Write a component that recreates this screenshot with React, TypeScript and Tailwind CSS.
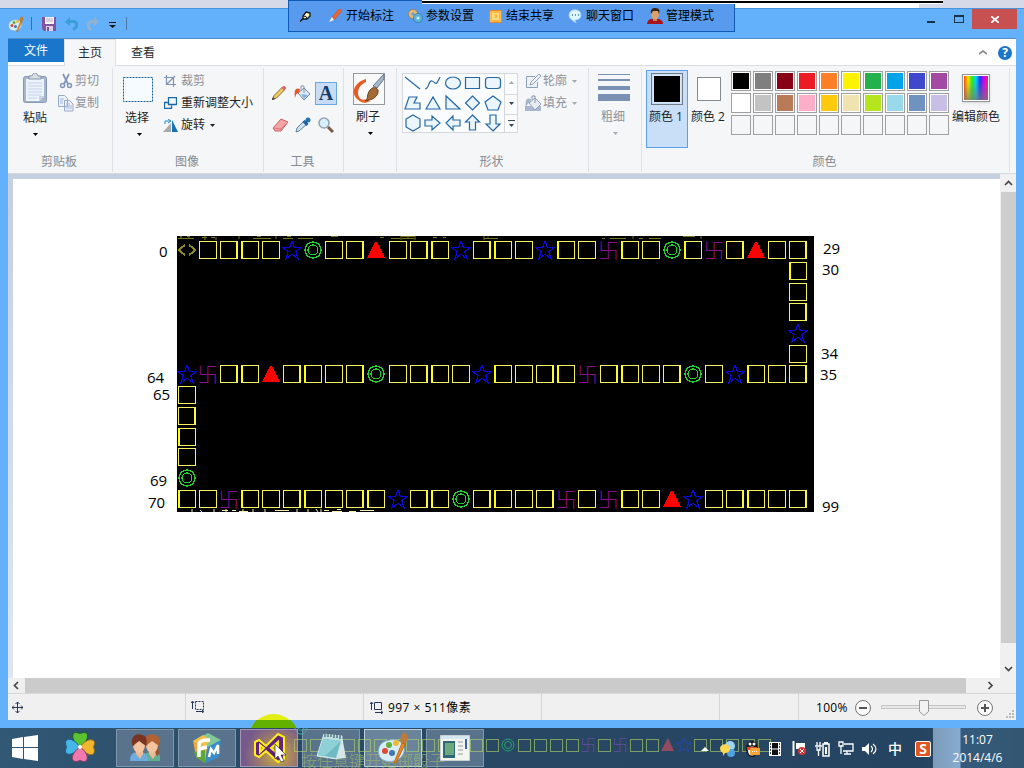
import React from "react";

type Kid = { children?: React.ReactNode; className?: string };

const Svg = ({ w, h, vb, children, className = "" }: { w: number; h: number; vb?: string } & Kid) => (
  <svg width={w} height={h} viewBox={vb ?? `0 0 ${w} ${h}`} className={`block shrink-0 ${className}`} fill="none">
    {children}
  </svg>
);

const Arrow = ({ className = "text-[#222]" }: Kid) => (
  <Svg w={5} h={3} className={className}>
    <path d="M0 0h5L2.5 3z" fill="currentColor" />
  </Svg>
);

const STAR = "M8 .8l1.9 5.1 5.6.1-4.4 3.2 1.6 5.6L8 11.5l-4.7 3.3 1.6-5.6L.5 6l5.6-.1z";

const Tile = ({ kind, i }: { kind: string; i: number }) => {
  if (kind === "Y")
    return (
      <Svg w={20} h={18}>
        <path d="M8 4L1.500 9 8 14M12 4l6.500 5-6.500 5" stroke="#8a8a18" strokeWidth="2" shapeRendering="crispEdges" />
      </Svg>
    );
  if (kind === "s")
    return (
      <Svg w={20} h={20} vb="0 0 16 16">
        <path d={STAR} stroke="#0808dc" strokeWidth="1" shapeRendering="crispEdges" />
      </Svg>
    );
  if (kind === "o")
    return (
      <Svg w={18} h={18}>
        <circle cx="9" cy="9" r="8" stroke="#20cf30" strokeWidth="1.4" shapeRendering="crispEdges" />
        <circle cx="9" cy="9" r="5" stroke="#20cf30" strokeWidth="1.2" shapeRendering="crispEdges" />
      </Svg>
    );
  if (kind === "t")
    return (
      <Svg w={18} h={18}>
        <path d="M8 1h2l8 16H0z" fill="#ff0000" shapeRendering="crispEdges" />
      </Svg>
    );
  if (kind === "w") return <span className="text-[21px] font-light leading-[20px] text-[#8a108c]">卐</span>;
  if (kind === "q")
    return (
      <div
        className={`h-[18px] w-[18px] border border-[#f6f25c] ${i % 3 === 0 ? "border-l-2 border-l-[#ffff00]" : ""} ${i % 3 === 2 ? "border-r-2 border-r-[#fbf83c]" : ""}`}
      />
    );
  return null;
};

const gap = ".".repeat(29);
const board = [
  "Yqqqqsoqqtqqqsqqqsqqwqqoqwqtqq",
  gap + "q",
  gap + "q",
  gap + "q",
  gap + "s",
  gap + "q",
  "swqqtqqqqoqqqqsqqqqwqqqqoqsqqq",
  "q" + gap,
  "q" + gap,
  "q" + gap,
  "q" + gap,
  "o" + gap,
  "qqwqqqqqqqsqqoqqqqwqwqqtsqqqqq",
];

const Board = () => (
  <div className="absolute left-[164px] top-[57px] h-[276px] w-[637px] overflow-hidden bg-black">
    <div className="flex h-[4px]">
      <Svg w={637} h={4}>
        <path
          d="M1 2.5h16M3 .5h2M10 .5h3M4 0v3M12 0v3M25 1.5h5M34 1.5h4M28 0v4M39 1v3M62 0v3M76 2.5h18M80 .5h4M99 0v3M106 2.5h10M110 .5h4M121 2.5h15M154 .5h7M203 1.5h4M214 2.5h9M224 .5h14M225 2.5h12M231 0v3M224 0v4M238 0v4M256 1.5h4M266 1.5h3M307 2.5h14M311 .5v2M307 0v4M425 2.5h3M433 2.5h16M456 0v3M462 2.5h4M472 2.5h12M506 .5h12M524 0v3"
          stroke="#77751b"
        />
      </Svg>
    </div>
    <div className="-ml-px grid h-[269px] w-[633px] grid-cols-[repeat(30,minmax(0,1fr))] grid-rows-[repeat(13,minmax(0,1fr))]">
      {board.flatMap((row, r) =>
        [...row].map((k, c) => (
          <div key={`${r}-${c}`} className="flex items-center justify-center">
            <Tile kind={k} i={c + r} />
          </div>
        ))
      )}
    </div>
    <Svg w={637} h={3}>
      <path
        d="M15 0v3M23 1l2 2M37 0v3M45 1.5h6M55 1.5h4M49 0v3M62 2.5h9M66 0v3M76 0v3M88 0v3M98 1.5h14M120 0v3M131 0v3M139 0l2 3M147 1.5h5M144 0v3M155 2.5h10M160 .5h4M172 2.5h7M183 1.5h14"
        stroke="#f1eeb0"
      />
    </Svg>
  </div>
);

const Num = ({ children, className }: Kid) => (
  <span className={`absolute -mt-px text-[15px] leading-[18px] text-black ${className}`}>{children}</span>
);

const Palette = ({ s = 16 }: { s?: number }) => (
  <Svg w={s} h={s} vb="0 0 32 32">
    <path d="M13 8C4 9 0 15 2 23c2 8 17 9 23 1 4-5 2-10 0-13-3-3-8-4-12-3z" fill="#d8ecf5" stroke="#87aec5" />
    <circle cx="8" cy="19" r="3" fill="#dc4a35" />
    <circle cx="12" cy="13" r="3" fill="#63af3b" />
    <circle cx="19" cy="11" r="3" fill="#e9bd33" />
    <circle cx="15" cy="21" r="3" fill="#3f78ad" />
    <path d="M27 0c5 3 4 8 1 12l-4-1C22 6 25 3 27 0z" fill="#bf7b35" />
    <path d="M25 11l3 1-9 19h-2z" fill="#ef8b29" stroke="#bb6718" />
  </Svg>
);

const Person = ({ x = 0, girl = false }: { x?: number; girl?: boolean }) => (
  <g transform={`translate(${x} 0)`}>
    <path d="M0 28c0-7 3-9 9-9s9 2 9 9z" fill={girl ? "#65ad94" : "#6cacdf"} />
    <path d="M6 17h7v4l-3 5-4-5z" fill="#efb992" />
    {girl && <path d="M3 5c4-6 13-2 12 6 0 5 2 8 0 12-4-1-3-10-3-12z" fill="#9b512e" />}
    <ellipse cx="9" cy="12" rx="6" ry="8" fill="#f4c4a0" />
    <path d="M2 12C0 2 8 0 12 2c6 1 5 7 4 11-3-2-5-4-7-5-2 2-4 2-5 5z" fill={girl ? "#b06232" : "#7b3424"} />
  </g>
);

const Group = ({ w, label, children, className = "" }: { w: string; label?: string } & Kid) => (
  <div className={`flex h-[107px] shrink-0 flex-col ${w}`}>
    <div className="flex h-[104px] flex-col border-r border-[#dfe1e4]">
      <div className={`flex h-[84px] ${className}`}>{children}</div>
      <div className="pr-[2px] text-center text-[12px] leading-[21px] text-[#868b91]">{label}</div>
    </div>
  </div>
);

const Mini = ({ icon, text, arrow, dim }: { icon: React.ReactNode; text: string; arrow?: boolean; dim?: boolean }) => (
  <div className={`flex h-[22px] items-center whitespace-nowrap text-[12px] ${dim ? "text-[#8e9298]" : "text-[#242424]"}`}>
    <div className="mr-[2px] flex w-[15px] shrink-0 justify-center">{icon}</div>
    {text}
    {arrow && <Arrow className={dim ? "ml-[5px] text-[#a5a9ae]" : "ml-[5px] text-[#222]"} />}
  </div>
);

const palette = [
  "#000000", "#7f7f7f", "#880015", "#ed1c24", "#ff7f27", "#fff200", "#22b14c", "#00a2e8", "#3f48cc", "#a349a4",
  "#ffffff", "#c3c3c3", "#b97a57", "#ffaec9", "#ffc90e", "#efe4b0", "#b5e61d", "#99d9ea", "#7092be", "#c8bfe7",
];

const PencilIcon = () => (
  <Svg w={16} h={16}>
    <path d="M1.500 14.500l1.500-4L11 2.500l2.500 2.500-8 8z" fill="#f0ca60" stroke="#8a6a3c" />
    <path d="M11 2.500L13 1l2 2-1.500 2z" fill="#e46360" stroke="#b55a58" strokeWidth=".6" />
    <path d="M1 15l1-3 2 2z" fill="#333" />
  </Svg>
);
const BucketIcon = ({ dim = false }: { dim?: boolean }) => (
  <Svg w={17} h={17}>
    {dim && <path d="M0 11h16v5H0z" fill="#aab7cf" />}
    <path d="M4 8l6-5 6 6-6 6z" fill={dim ? "#e8ecf2" : "#dceaf7"} stroke={dim ? "#93a3bd" : "#6f87a6"} />
    {!dim && <path d="M7 9l7 1-4 4z" fill="#84b4de" />}
    <path d="M10 8V1H7v4" stroke="#8494aa" />
    <path d="M6 4C1 2 0 6 1 13c1-4 2-5 4-5z" fill={dim ? "#a7b4ca" : "#e45824"} />
  </Svg>
);

const Shapes = () => (
  <Svg w={116} h={60}>
    <rect x=".5" y=".5" width="115" height="59" fill="#fafcfe" stroke="#d5d9de" />
    <path d="M102.500 0v60M102 21.500h14M102 41.500h14" stroke="#d5d9de" />
    <g stroke="#2468a5" fill="#eaf5fc" strokeWidth="1.2">
      <path d="M3 4l15 12" />
      <path d="M23 16c5-1 3-9 7-8s3 7 8-4" fill="none" />
      <ellipse cx="51" cy="10" rx="7.500" ry="6" />
      <path d="M63.500 4.500h14v11h-14z" />
      <rect x="83.500" y="4.500" width="15" height="11" rx="3" />
      <path d="M3 36l4-12h8l-3 6h6v6zM24 36l7-12 7 12zM44 23v13h14zM70.500 23l7 7-7 7-7-7zM91 23l8 6-3 8H86l-3-8z" />
      <path d="M11 42l7 4v8l-7 4-7-4v-8zM23 47h7v-4l8 7-8 7v-4h-7zM58 47h-7v-4l-7 7 7 7v-4h7zM70.500 42l7 7h-4v8h-6v-8h-4zM91 58l7-7h-4v-9h-6v9h-4z" />
    </g>
    <path d="M107 11h5l-2.500-3z" fill="#a3a9b1" />
    <path d="M107 29h5l-2.500 3zM107 51h5l-2.500 3zM106 47h7v1h-7z" fill="#34475b" />
  </Svg>
);

const Ribbon = () => (
  <div className="flex h-[107px] bg-[#f4f6f8] pt-[2px]">
    <Group w="w-[105px]" label="剪贴板" className="pl-[14px] pt-[5px]">
      <div className="mr-[10px] flex w-[26px] flex-col items-center text-[12px] text-[#242424]">
        <Svg w={26} h={32}>
          <rect x="1.500" y="3.500" width="23" height="26" rx="2" fill="#a7b5cc" stroke="#8496b4" />
          <path d="M4 6h18v17l-5 5H4z" fill="#edf3fb" />
          <path d="M6 10h14M6 13h14M6 16h14M6 19h14M6 22h13M6 25h9" stroke="#c3d1e5" />
          <path d="M22 23l-5 5v-5z" fill="#c8d3e4" />
          <path d="M7 3h3c1-4 5-4 6 0h3v3H7z" fill="#d9dde4" stroke="#8391a8" />
        </Svg>
        <span className="mt-[4px] whitespace-nowrap leading-[18px]">粘贴</span>
        <Arrow className="mt-[6px] text-black" />
      </div>
      <div className="-mt-[3px]">
        <Mini dim text="剪切" icon={<Svg w={14} h={16}><path d="M4 1l5 10M10 1L5 11" stroke="#8295b6" strokeWidth="1.700" /><circle cx="3.500" cy="12.500" r="2" stroke="#8295b6" strokeWidth="1.500" /><circle cx="10.500" cy="12.500" r="2" stroke="#8295b6" strokeWidth="1.500" /></Svg>} />
        <Mini dim text="复制" icon={<Svg w={16} h={17}><path d="M.5.500h6l3 3v8h-9zM6.500 5.500h5l3.500 3.500v7h-8.500z" fill="#edf2fb" stroke="#97a9ca" /><path d="M2 4h4M2 6h3M2 8h3M8 9h4M8 11h6M8 13h6" stroke="#a6b9da" /></Svg>} />
      </div>
    </Group>
    <Group w="w-[151px]" label="图像" className="pl-[9px] pt-[2px]">
      <div className="mr-[10px] flex w-[32px] flex-col items-center text-[12px] text-[#242424]">
        <Svg w={32} h={35}>
          <rect x="1.500" y="7.500" width="29" height="24" fill="#f5fbff" stroke="#165e99" strokeDasharray="2 1" />
        </Svg>
        <span className="-ml-[2px] mt-[4px] whitespace-nowrap leading-[18px]">选择</span>
        <Arrow className="ml-[2px] mt-[6px] text-black" />
      </div>
      <div>
        <Mini dim text="裁剪" icon={<Svg w={12} h={12} className="-ml-[3px]"><path d="M2.500 0v9.500H12M0 2.500h9.500V12M3 9l8-8" stroke="#8093b5" strokeWidth="1.200" /></Svg>} />
        <Mini text="重新调整大小" icon={<Svg w={13} h={12} className="-ml-[3px]"><path d="M4.500.500h8v7h-8zM4 5.500H.5v6h7v-3" stroke="#176aa8" strokeWidth="1.300" /></Svg>} />
        <Mini arrow text="旋转" icon={<Svg w={15} h={13} className="-ml-[3px]"><path d="M8 4v9H0z" fill="#a7abb0" /><path d="M9 1l6 12H9z" fill="#1571b4" /><path d="M2 5V2h5M5 0l3 2-3 2" stroke="#2587cc" /></Svg>} />
      </div>
    </Group>
    <Group w="w-[80px]" label="工具" className="pl-[4px] pt-[13px]">
      <div className="grid h-[64px] w-[70px] grid-cols-[22px_25px_22px] grid-rows-[24px_40px] place-items-center">
        <PencilIcon />
        <BucketIcon />
        <div className="flex h-[23px] w-[22px] items-center justify-center border border-[#6ba7e2] bg-[#c7ddf5] text-[20px] font-bold text-[#163b64] [font-family:'Liberation_Serif',serif]">A</div>
        <Svg w={17} h={14} className="ml-[2px]"><path d="M1 10l8-9 7 3-7 9H3z" fill="#f2a4a3" stroke="#c76266" /><path d="M1 10l8 1 7-7M9 11v2" stroke="#db797b" /></Svg>
        <Svg w={16} h={16}><path d="M1 15l1-4 7-7 3 3-8 7z" fill="#cfe4f2" stroke="#617c94" /><path d="M8.500 4l4 4M11 5l2-2" stroke="#1f63a0" strokeWidth="3" /><circle cx="13" cy="3" r="2.500" fill="#2572b0" /></Svg>
        <Svg w={16} h={16}><circle cx="6" cy="6" r="5" fill="#daeffc" stroke="#91a4b6" strokeWidth="1.500" /><path d="M10 10l5 5" stroke="#7d5a44" strokeWidth="3" /></Svg>
      </div>
    </Group>
    <Group w="w-[53px]" className="flex-col items-center pt-[5px] text-[12px] text-[#242424]">
      <Svg w={32} h={32} className="-ml-[2px]">
        <rect x=".5" y=".5" width="31" height="31" fill="#f8f9f9" stroke="#94999e" />
        <path d="M13 6C2 9-3 19 4 26c4 4 9 4 14 2-9 1-13-3-13-8 0-6 4-9 8-11z" fill="#e65a22" />
        <path d="M4 24c4 4 10 3 13 0l-2 5c-4 2-9 0-11-5z" fill="#f0632a" />
        <path d="M24 15l7-9V1L20 13z" fill="#a9b8c8" stroke="#60758b" />
        <path d="M15 21c2-7 8-8 10-4 1 6-5 10-13 11 3-2 2-4 3-7z" fill="#a46b36" stroke="#70411e" />
      </Svg>
      <span className="-ml-[4px] mt-[3px] leading-[18px]">刷子</span>
      <Arrow className="mt-[6px] text-black" />
    </Group>
    <Group w="w-[192px]" label="形状" className="pl-[5px] pt-[5px]">
      <Shapes />
      <div className="-mt-[3px] ml-[8px]">
        <Mini dim arrow text="轮廓" icon={<Svg w={16} h={15}><path d="M9 2.500H.5v11h11V8M4 11l1-3 8-8 2 2-8 8z" fill="#eef2f8" stroke="#8c9fba" /></Svg>} />
        <Mini dim arrow text="填充" icon={<BucketIcon dim />} />
      </div>
    </Group>
    <Group w="w-[53px]" className="flex-col items-center pt-[6px] text-[12px] text-[#8e9298]">
      <Svg w={32} h={28} className="-ml-[2px]"><path d="M0 0h32v1H0zM0 5h32v2H0zM0 12h32v4H0zM0 20h32v7H0z" fill="#7b91b4" /></Svg>
      <span className="-ml-[4px] mt-[6px] leading-[18px]">粗细</span>
      <Arrow className="mt-[6px] text-[#a5a9ae]" />
    </Group>
    <Group w="w-[368px]" label="颜色" className="pl-[4px] pt-[2px]">
      <div className="flex h-[78px] w-[42px] shrink-0 flex-col items-center whitespace-nowrap border border-[#5b9eea] bg-[#c8dff7] pt-[2px] text-[12px] text-[#242424]">
        <div className="h-[32px] w-[32px] border border-[#727b86] p-px"><div className="h-full w-full border border-[#d8e8f8] bg-black" /></div>
        <span className="-ml-[2px] mt-[3px] leading-[18px]">颜色 1</span>
      </div>
      <div className="flex w-[42px] shrink-0 flex-col items-center whitespace-nowrap pt-[7px] text-[12px] text-[#242424]">
        <div className="h-[24px] w-[24px] border border-[#858a91] bg-white" />
        <span className="-ml-[2px] mt-[7px] leading-[18px]">颜色 2</span>
      </div>
      <div className="ml-px mt-px grid h-[64px] w-[218px] shrink-0 grid-cols-[repeat(10,20px)] grid-rows-[repeat(3,20px)] gap-[2px]">
        {Array.from({ length: 30 }, (_, i) => (
          <div key={i} className={`border border-[#a0a0a0] p-px ${i < 20 ? "bg-white" : ""}`}>
            <div className="h-full w-full" style={{ background: palette[i] ?? "#f4f6f8" }} />
          </div>
        ))}
      </div>
      <div className="ml-[2px] flex w-[50px] shrink-0 flex-col items-center whitespace-nowrap pt-[4px] text-[12px] text-[#242424]">
        <div className="h-[28px] w-[28px] border border-[#93979c] bg-white p-px shadow-sm">
          <div className="h-full w-full bg-[linear-gradient(to_right,#ff4a00,#ffdf00,#24f020,#00d2ff,#2530f5,#c909e9,#ff1080)]">
            <div className="h-full w-full bg-[linear-gradient(to_bottom,transparent_20%,#777b)]" />
          </div>
        </div>
        <span className="mt-[6px] leading-[18px]">编辑颜色</span>
      </div>
    </Group>
  </div>
);

const ShareItem = ({ icon, text }: { icon: React.ReactNode; text: string }) => (
  <div className="flex w-[80px] items-center whitespace-nowrap">
    <div className="mr-[3px] flex w-[16px] justify-center">{icon}</div>
    {text}
  </div>
);

const ShareBar = () => (
  <>
    <div className="absolute left-[288px] top-0 flex h-[32px] w-[447px] items-center border border-[#0e5ab5] bg-[#589bee] pl-[11px] text-[12px] text-black">
      <Svg w={11} h={11} className="mr-[16px]"><path d="M0 10.500l3-3" stroke="#111" strokeWidth="1.500" /><path d="M3 5l3-4 4 1v3L7 8 3 8z" fill="#fff7ca" stroke="#111" strokeWidth="1.300" /><path d="M3 5l3 .5 1 2.500" stroke="#111" /></Svg>
      <ShareItem text="开始标注" icon={<Svg w={14} h={14}><path d="M4 8l7-8c2 0 3 1 2 3l-7 8z" fill="#ef6532" stroke="#b64b30" strokeWidth=".5" /><path d="M1 13l3-5 2 3z" fill="#eaf7e7" /></Svg>} />
      <ShareItem text="参数设置" icon={<Svg w={15} h={14}><circle cx="5" cy="5" r="3" stroke="#e5ba70" strokeWidth="3" /><circle cx="5" cy="5" r="4.700" stroke="#8f7444" strokeWidth=".6" /><circle cx="10" cy="9" r="3" fill="#d5edf6" stroke="#59b3d8" strokeWidth="3" /><circle cx="10" cy="9" r="4.600" stroke="#246f9d" strokeWidth=".6" /></Svg>} />
      <ShareItem text="结束共享" icon={<Svg w={13} h={13}><rect x=".5" y=".5" width="12" height="12" rx="1.500" fill="#ffb84e" stroke="#ef892e" /><path d="M3 3h7v7H3z" fill="#ffda78" /><path d="M5 5h3v2H6v1" stroke="#f5a645" /></Svg>} />
      <ShareItem text="聊天窗口" icon={<Svg w={14} h={14}><path d="M1 6C1-1 13-1 13 6c0 4-4 5-6 5l1 3-4-3C2 10 1 8 1 6z" fill="#dff5ff" stroke="#9dcdef" /><path d="M4 6h1M7 6h1M10 6h1" stroke="#3579b5" strokeWidth="1.500" /></Svg>} />
      <ShareItem text="管理模式" icon={<Svg w={16} h={16}><path d="M0 16c1-5 3-5 6-5h4c4 0 6 2 6 5z" fill="#a8141c" /><path d="M6 10h4v3H6z" fill="#c98452" /><ellipse cx="8" cy="6" rx="4" ry="5.500" fill="#dba06c" /><path d="M4 6C3 1 6 0 8 0c5 0 5 3 4 6l-1-3H6z" fill="#382119" /></Svg>} />
    </div>
    <div className="absolute left-[422px] top-0 h-[4px] w-[521px] border-b border-t border-white bg-black" />
  </>
);

const TaskButton = ({ children, active }: { active?: boolean } & Kid) => (
  <div className={`mr-[4px] flex h-[38px] w-[58px] shrink-0 items-center justify-center border ${active ? "border-[#c0d0da] bg-[#69849b]" : "border-[#8098ab] bg-[#58738b]"}`}>
    <div className="relative z-10">{children}</div>
  </div>
);

const ghost = "qqqqqqqqqqqqqoqqqqwqwqqtsqqqqq";

const Taskbar = () => (
  <div className="relative flex h-[40px] shrink-0 overflow-hidden bg-[linear-gradient(to_right,#315875,#294a66_25%,#254461_90%,#34566f)] pt-px">
    <div className="flex w-[50px] items-center justify-center pb-[2px]">
      <Svg w={26} h={26}><path d="M0 4l11-2v10H0zM12 2l14-2v12H12zM0 13h11v11L0 22zM12 13h14v13l-14-2z" fill="white" /></Svg>
    </div>
    <div className="flex w-[66px] items-center justify-center pb-[3px] pr-[6px]">
      <Svg w={32} h={32}>
        <path d="M16 16C6 9 8 1 12 1.500c2 0 3 1 4 1s2-1 4-1c5 0 6 7-4 14.500z" fill="#5ac331" stroke="#1d5a28" />
        <path d="M16 16C9 26 1 24 1.500 20c0-2 1-3 1-4s-1-2-1-4C1.500 7 9 6 16 16z" fill="#44b7e8" stroke="#1a5f8b" />
        <path d="M16 16C23 6 31 8 30.500 12c0 2-1 3-1 4s1 2 1 4c0 5-7 6-14.500-4z" fill="#f0b62f" stroke="#8f6b20" />
        <path d="M16 16c10 7 8 15 4 14.500-2 0-3-1-4-1s-2 1-4 1C7 30.500 6 23 16 16z" fill="#ef79ac" stroke="#8f3c60" />
        <circle cx="16" cy="16" r="2" fill="white" />
      </Svg>
    </div>
    <TaskButton><Svg w={30} h={30}><Person girl x={13} /><Person /></Svg></TaskButton>
    <TaskButton>
      <Svg w={32} h={32}>
        <path d="M2 9L17 1l13 7-13 7z" fill="#7fca9b" />
        <path d="M2 9l10-6 8 5-7 8z" fill="#f3c14b" />
        <path d="M2 9l14 8-2 14-9-6z" fill="#f2a93b" />
        <path d="M3 20l11-2v13l-9-6z" fill="#5aa935" />
        <path d="M16 16l14-8-2 17-13 6z" fill="#3a8ccb" />
        <path d="M8 25V13c0-4 3-5 11-5M8 17l8-2" stroke="#fff" strokeWidth="3.500" />
        <path d="M18 25l2-8 3 4 4-8v9" stroke="#fff" strokeWidth="2.500" />
      </Svg>
    </TaskButton>
    <div className="mr-[4px] flex h-[38px] w-[58px] shrink-0 items-center justify-center border border-[#a597b1] bg-[radial-gradient(circle_at_65%_70%,#c9b13a,#a48262_35%,#76598d_75%)]">
      <Svg w={34} h={32}><path d="M3 10l4-2 7 6L26 2l6 3v22l-6 3-12-11-7 6-4-2zM8 13v7l4-4zM19 16l7 6V10z" fill="#632184" fillRule="evenodd" stroke="#fff117" strokeWidth="2" /></Svg>
    </div>
    <TaskButton><Svg w={32} h={32}><path d="M9 2l18 2-5 23-20-3z" fill="#b9dfe3" stroke="#d7eff2" /><path d="M27 4l4 22-9 1z" fill="#d6e7e8" /><path d="M8 7l18 2-5 17-18-3z" fill="#6fbac4" /><path d="M8 7l18 2-16 15-7-1z" fill="#8fd0d6" /><path d="M10 1v4M13 1v4M16 1v4M19 2v4M22 2v4M25 3v4" stroke="#43616b" strokeWidth="1.200" /></Svg></TaskButton>
    <TaskButton active><Palette s={32} /></TaskButton>
    <TaskButton><Svg w={30} h={26}><path d="M.5.500h29v25H.5z" fill="#f4f5ef" stroke="#c7d1d1" /><path d="M1 1h28v3H1z" fill="#d6e8ef" /><path d="M3 6h12v17H3z" fill="#326778" /><path d="M5 8h9v12H5z" fill="#6baa7e" /><path d="M18 7h5M18 11h5M18 15h5M18 19h5" stroke="#929ba0" /><path d="M26 4v10" stroke="#3860bd" strokeWidth="2" /></Svg></TaskButton>
    <div className="absolute left-[292px] top-[9px] flex opacity-60">
      {[...ghost].map((k, i) => (
        <div key={i} className="flex h-[16px] w-[16px] items-center justify-center">
          {k === "q" && <div className="h-[13px] w-[13px] border border-[#b4d868]" />}
          {k === "o" && <Svg w={14} h={14}><circle cx="7" cy="7" r="6" stroke="#25df76" /><circle cx="7" cy="7" r="3.500" stroke="#25df76" /></Svg>}
          {k === "t" && <Svg w={14} h={14}><path d="M7 0l6 13H0z" fill="#d94e60" /></Svg>}
          {k === "s" && <Svg w={16} h={16}><path d={STAR} stroke="#2943e6" /></Svg>}
          {k === "w" && <span className="text-[16px] font-light leading-none text-[#8a4cd0]">卐</span>}
        </div>
      ))}
    </div>
    <Svg w={14} h={8} className="absolute left-[294px] top-0"><path d="M1 0c1 4 3 6 6 6s5-2 6-6M4 0c1 3 5 3 6 0" stroke="#3fb0a0" /></Svg>
    <div className="absolute left-[301px] top-[24px] whitespace-nowrap text-[16px] font-light leading-[16px] text-[#a1b968] opacity-70 [font-family:'Noto_Sans_CJK_SC',sans-serif]">按任意键开始掷骰子</div>
    <div className="relative ml-auto flex h-[39px] items-center">
      <div className="mr-[19px] flex items-center gap-[8px]">
        <Svg w={8} h={5} className="-ml-[7px] mr-[3px]"><path d="M0 5l4-4 4 4z" fill="white" /></Svg>
        <Svg w={16} h={16}><circle cx="10" cy="5" r="5" fill="#9fd5f3" /><circle cx="11" cy="12" r="4" fill="#51a3e2" /><path d="M0 7c1-5 10-5 10 1 0 3-3 4-5 4l-2 3v-3C1 11 0 9 0 7z" fill="#ffd94e" /></Svg>
        <Svg w={16} h={17} className="ml-[1px]"><ellipse cx="7" cy="9" rx="6" ry="8" fill="#181818" /><ellipse cx="7" cy="11" rx="4" ry="4.500" fill="white" /><path d="M2 7h10v3H2z" fill="#e54a26" /><circle cx="5" cy="4" r="1.500" fill="white" /><circle cx="9" cy="4" r="1.500" fill="white" /><rect x="5" y="8" width="10" height="7" rx="1" fill="#f3a636" /><path d="M7 11.500h6" stroke="#fff" strokeDasharray="1 1" /></Svg>
        <Svg w={12} h={14}><path d="M0 0h12v14H0z" fill="#fff" /><path d="M3 1h6v12H3z" fill="#111" /><path d="M1 2h1M1 5h1M1 8h1M1 11h1M10 2h1M10 5h1M10 8h1M10 11h1" stroke="#111" strokeWidth="1.500" /><path d="M3 7h6" stroke="white" /></Svg>
        <Svg w={15} h={15} className="ml-[3px]"><path d="M1.500 0v15" stroke="white" strokeWidth="2" /><path d="M4 2h9v6H4z" fill="white" /><circle cx="10" cy="10" r="4" fill="#d53535" /><path d="M8 8l4 4M12 8l-4 4" stroke="white" /></Svg>
        <Svg w={15} h={16}><path d="M8 3h6v12H8z" stroke="white" strokeWidth="1.500" /><path d="M10 6h2v7h-2zM9 1h4v2H9z" fill="white" /><path d="M2 1v4M5 1v4M0 5h7M2 6v3h3V6M3.500 9v6" stroke="white" strokeWidth="1.300" /></Svg>
        <Svg w={16} h={15}><path d="M6 3h9v7H5M9 10v3M6 13h7M1 1h4v4H1zM3 5v8" stroke="white" strokeWidth="1.300" /></Svg>
        <Svg w={16} h={14}><path d="M0 5h3l4-4v12L3 9H0z" fill="white" /><path d="M9 4c2 2 2 4 0 6M11 2c4 3 4 7 0 10" stroke="white" strokeWidth="1.200" /></Svg>
        <span className="ml-[2px] w-[18px] text-[14px] font-medium text-white">中</span>
        <div className="ml-px flex h-[16px] w-[16px] items-center justify-center rounded-[2px] border border-white bg-[#e25422] text-[14px] font-bold leading-none text-white">S</div>
      </div>
    </div>
    <div className="-ml-[17px] -mt-px flex h-[40px] w-[91px] shrink-0 justify-center bg-[linear-gradient(to_right,#7c9bb8_0,#87abd0_27px,#345b7c_28px,#335772)] pr-[2px] pt-[3px] text-center text-[12px] leading-[18px] text-white">
      <div>11:07<br />2014/4/6</div>
    </div>
  </div>
);

const Chevron = ({ d }: { d: string }) => (
  <Svg w={9} h={9}><path d={d} stroke="#454545" strokeWidth="1.700" /></Svg>
);

export default function App() {
  return (
    <div className="relative flex h-[768px] w-[1024px] flex-col overflow-hidden bg-[#d5d9e8] [font-family:'Open_Sans','Noto_Sans_CJK_SC',sans-serif]">
      <div className="flex h-[8px] shrink-0 justify-end"><div className="mr-[105px] w-[189px] bg-white" /></div>
      <div className="flex h-[720px] shrink-0 flex-col border-t border-[#4a94dc] bg-[#63b1fb] px-[8px]">
        <div className="flex h-[30px] shrink-0 justify-between border-b border-[#518ec7]">
          <div className="flex h-[29px] items-center">
            <Palette />
            <div className="ml-[7px] h-[13px] w-px bg-[#3c6f9f]" />
            <Svg w={14} h={14} className="ml-[10px]"><path d="M0 0h14v14H2l-2-2z" fill="#80549f" /><path d="M3 0h9v7H3z" fill="#f8f5fa" /><path d="M4 9h7v5H4z" fill="#ddd2e5" /><path d="M5 10h2v4H5z" fill="#775192" /><path d="M4 2h7M4 4h7" stroke="#b8abc3" /></Svg>
            <Svg w={14} h={14} className="ml-[9px]"><path d="M3 4.500h5c5 0 5 6 0 8" stroke="#3a9fd6" strokeWidth="3" /><path d="M5 0v9L0 5z" fill="#3a9fd6" /></Svg>
            <Svg w={14} h={14} className="ml-[7px]"><path d="M10 4.500H7c-6 0-6 6-2 8.500" stroke="#93b3d3" strokeWidth="3" /><path d="M8 0v9l5-4z" fill="#93b3d3" /></Svg>
            <Svg w={7} h={6} className="ml-[9px] mt-[2px]"><path d="M0 0h7v1H0zM0 3h7L3.500 6z" fill="#111" /></Svg>
            <div className="ml-[10px] h-[13px] w-px bg-[#4779a8]" />
          </div>
          <div className="-mr-px flex h-[20px] items-center">
            <div className="mr-[19px] mt-[6px] h-[2px] w-[8px] bg-[#173349]" />
            <div className="mr-[8px] h-[8px] w-[10px] border border-t-2 border-[#173349]" />
            <div className="flex h-[20px] w-[45px] items-center justify-center bg-[#c75050]"><Svg w={8} h={7}><path d="M0 0l8 7M8 0L0 7" stroke="white" strokeWidth="1.700" /></Svg></div>
          </div>
        </div>
        <div className="flex h-[27px] shrink-0 bg-white text-[12px] text-[#2b2b2b]">
          <div className="flex w-[56px] border-b border-[#d9dde1]"><div className="flex h-[23px] w-full items-center justify-center bg-[#1976ca] text-white">文件</div></div>
          <div className="flex w-[52px] items-center justify-center border-x border-t border-[#dce0e4] bg-[#f4f6f8]">主页</div>
          <div className="flex flex-1 items-center border-b border-[#d9dde1] pl-[15px] pt-px">
            查看
            <Svg w={8} h={5} className="ml-auto"><path d="M0 4l4-3 4 3" stroke="#8b8b8b" strokeWidth="1.700" /></Svg>
            <div className="ml-[11px] mr-[4px] flex h-[14px] w-[14px] items-center justify-center rounded-full bg-[#1976ca] text-[12px] font-bold leading-none text-white">?</div>
          </div>
        </div>
        <Ribbon />
        <div className="flex h-[505px] shrink-0">
          <div className="flex w-[992px] flex-col border-t border-[#d5dae0] bg-[linear-gradient(to_bottom,#c4cfe0,#dfe6f2)] pl-[5px] pt-[5px]">
            <div className="relative flex-1 bg-white">
              <Board />
              <Num className="left-[146px] top-[64px]">0</Num>
              <Num className="left-[134px] top-[190px]">64</Num>
              <Num className="left-[140px] top-[207px]">65</Num>
              <Num className="left-[137px] top-[293px]">69</Num>
              <Num className="left-[135px] top-[315px]">70</Num>
              <Num className="left-[810px] top-[61px]">29</Num>
              <Num className="left-[809px] top-[82px]">30</Num>
              <Num className="left-[808px] top-[166px]">34</Num>
              <Num className="left-[807px] top-[187px]">35</Num>
              <Num className="left-[809px] top-[319px]">99</Num>
            </div>
          </div>
          <div className="flex w-[16px] flex-col items-center border-t border-[#d5dae0] bg-[#f0f0f0]">
            <div className="flex h-[18px] items-center"><Chevron d="M1 6l3.500-3.500L8 6" /></div>
            <div className="h-[451px] w-[15px] bg-[#cdcdcd]" />
            <div className="flex flex-1 items-end pb-[4px]"><Chevron d="M1 2l3.500 3.500L8 2" /></div>
          </div>
        </div>
        <div className="flex h-[15px] shrink-0 items-center bg-[#f0f0f0]">
          <div className="flex w-[17px] justify-center"><Chevron d="M6 1L2.500 4.500 6 8" /></div>
          <div className="h-[15px] w-[941px] bg-[#cbcbcb]" />
          <div className="ml-[20px]"><Chevron d="M2.500 1L6 4.500 2.500 8" /></div>
        </div>
        <div className="flex h-[27px] shrink-0 border-t border-[#d8d8d8] bg-[#f0f0f0] text-[12px] text-black">
          <div className="flex w-[178px] items-center border-r border-[#d5d5d5] pl-[4px]"><Svg w={11} h={11}><path d="M5.500 0v11M0 5.500h11M3.500 2l2-2 2 2M3.500 9l2 2 2-2M2 3.500l-2 2 2 2M9 3.500l2 2-2 2" stroke="#263659" /></Svg></div>
          <div className="flex w-[178px] items-center border-r border-[#d5d5d5] pl-[5px]"><Svg w={13} h={12}><path d="M4.500.500h8v8h-8z" stroke="#263659" strokeDasharray="2 1" /><path d="M1.500 8V1M0 2l1.500-2L3 2M5 10.500h7M11 9l2 1.500L11 12" stroke="#263659" /></Svg></div>
          <div className="flex w-[178px] items-center whitespace-nowrap border-r border-[#d5d5d5] pl-[6px] pt-px tracking-[0.45px]"><Svg w={13} h={12} className="mr-[5px]"><path d="M4.500.500h7v7h-7zM1.500 8V1M0 2l1.500-2L3 2M5 10.500h7M11 9l2 1.500L11 12" stroke="#263659" /></Svg>997 × 511像素</div>
          <div className="w-[178px] border-r border-[#d5d5d5]" />
          <div className="w-[79px] border-r border-[#d5d5d5]" />
          <div className="flex flex-1 items-center pl-[17px]">
            <span className="w-[38px] pt-px tracking-[0.3px]">100%</span>
            <Svg w={16} h={16} className="ml-px mt-px"><circle cx="8" cy="8" r="7.500" fill="#fafafa" stroke="#777" /><path d="M4 8h8" stroke="#555" strokeWidth="2" /></Svg>
            <Svg w={85} h={16} className="ml-[10px] mt-px"><path d="M.5 5.500h84v3H.5z" fill="#e8e8e8" stroke="#c5c5c5" /><path d="M38.500.500h9v11l-4.500 4-4.500-4z" fill="#f3f3f3" stroke="#999" /></Svg>
            <Svg w={16} h={16} className="ml-[11px] mt-px"><circle cx="8" cy="8" r="7.500" fill="#fafafa" stroke="#777" /><path d="M4 8h8M8 4v8" stroke="#555" strokeWidth="2" /></Svg>
            <Svg w={8} h={8} className="ml-auto mr-[2px] mt-[13px]"><path d="M0 6h2v2H0zM3 6h2v2H3zM6 6h2v2H6zM3 3h2v2H3zM6 3h2v2H6zM6 0h2v2H6z" fill="#bcbcbc" /></Svg>
          </div>
        </div>
      </div>
      <Taskbar />
      <ShareBar />
      <Svg w={50} h={14} className="absolute left-[249px] top-[714px]"><circle cx="24.500" cy="25" r="25" fill="#e2ee10" /><path d="M7.500 6h34a25 25 0 0 1 6 8H2a25 25 0 0 1 5.500-8z" fill="#62b000" /></Svg>
      <Svg w={12} h={20} className="absolute left-[274px] top-[743px]"><path d="M1 1v15l3-3 3 6 3-1-3-6h5z" fill="white" stroke="#333" strokeWidth=".7" /></Svg>
    </div>
  );
}
